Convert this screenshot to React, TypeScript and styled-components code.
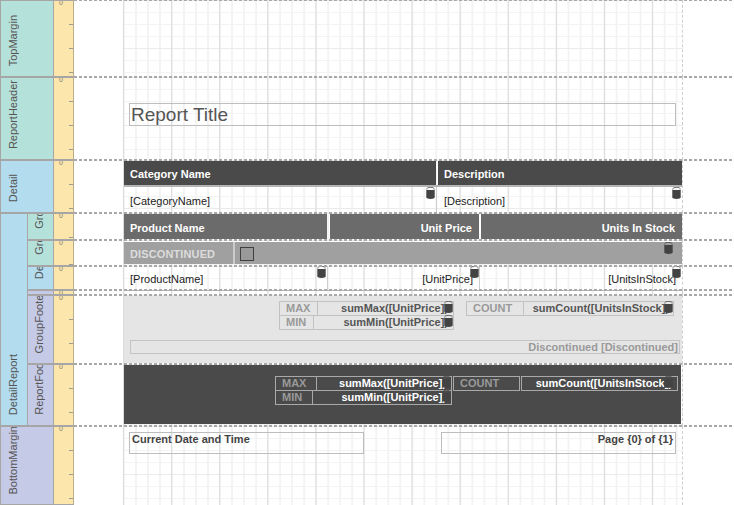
import React from "react"
import styled, { createGlobalStyle } from "styled-components"

const GlobalStyle = createGlobalStyle`
  html, body {
    margin: 0;
    background: #fff;
    overflow: hidden;
  }
  body {
    font-family: "Liberation Sans", Arial, sans-serif;
    font-size: 11px;
    color: #222;
  }
`

const tones = {
  teal: "#b5e1db",
  blue: "#b3dcef",
  lavender: "#c5cae7",
}
type Tone = keyof typeof tones

const Designer = styled.div`
  display: flex;
  flex-direction: column;
  width: 734px;
  height: 505px;
  overflow: hidden;
`

const BandRow = styled.div<{ $height: number }>`
  display: flex;
  height: ${(p) => p.$height}px;
  flex: none;
`

const BandLabel = styled.div<{ $tone: Tone; $width: number; $nested?: boolean }>`
  display: flex;
  flex-direction: column;
  justify-content: flex-end;
  align-items: flex-start;
  box-sizing: border-box;
  flex: none;
  width: ${(p) => p.$width}px;
  padding-left: ${(p) => (p.$nested ? 5 : 6)}px;
  background: ${(p) => tones[p.$tone]};
  border: 1px solid #a6a6a6;
  border-left-width: ${(p) => (p.$nested ? 0 : 1)}px;
  overflow: hidden;
`

const LabelText = styled.span`
  flex: none;
  writing-mode: vertical-rl;
  transform: rotate(180deg);
  margin-bottom: 10px;
  color: #555;
  white-space: nowrap;
  line-height: 13px;
`

const Surface = styled.div`
  position: relative;
  display: flex;
  flex: 1;

  /* band seam, sits across the ruler edge and the page */
  &::after {
    content: "";
    position: absolute;
    left: 20px;
    right: 0;
    top: -1px;
    height: 2px;
    background: repeating-linear-gradient(to right, #a8a8a8 0 3px, transparent 3px 5px);
  }
`

const Ruler = styled.div`
  box-sizing: border-box;
  flex: none;
  width: 20px;
  padding-left: 5px;
  background-color: #fde6ab;
  background-image: linear-gradient(#9c9c90 1px, transparent 1px);
  background-size: 4px 24px;
  background-position: right -1px;
  background-repeat: repeat-y;
  border-top: 1px solid #a6a6a6;
  border-bottom: 1px solid #a6a6a6;
  border-right: 1px solid #b9ae88;
  color: #777;
  font-size: 7px;
  line-height: 3px;
  overflow: hidden;
`

const Gutter = styled.div`
  flex: none;
  width: 49px;
  background: #fff;
`

const Canvas = styled.div`
  box-sizing: border-box;
  display: flex;
  flex-direction: column;
  flex: none;
  width: 560px;
  padding-left: 1px;
  border-right: 1px dashed #cfcfcf;
  background-image:
    linear-gradient(to right, #dcdcdc 1px, transparent 1px),
    linear-gradient(to bottom, #ebebeb 1px, transparent 1px),
    linear-gradient(to right, #f3f3f3 1.4px, transparent 1.4px),
    linear-gradient(to bottom, #f3f3f3 1.4px, transparent 1.4px);
  background-size: 48.1px 100%, 100% 48px, 12.03px 100%, 100% 12px;
`

const Row = styled.div<{ $height: number; $top?: number; $rule?: boolean }>`
  position: relative;
  display: flex;
  flex: none;
  box-sizing: border-box;
  height: ${(p) => p.$height}px;
  margin-top: ${(p) => p.$top ?? 0}px;
  border-top: ${(p) => (p.$rule ? "2px solid #b4b4b4" : "0")};
`

const Divider = styled.div`
  flex: none;
  width: 558px;
  height: 1px;
  background: #b4b4b4;
`

const HeadCell = styled.div<{ $width: number; $fill: string; $end?: boolean; $after?: number }>`
  display: flex;
  align-items: center;
  justify-content: ${(p) => (p.$end ? "flex-end" : "flex-start")};
  box-sizing: border-box;
  flex: none;
  width: ${(p) => p.$width}px;
  margin-right: ${(p) => p.$after ?? 0}px;
  padding: 2px 7px 0 6px;
  background: ${(p) => p.$fill};
  color: #fff;
  font-weight: 700;
`

const DataCell = styled.div<{ $width: number; $end?: boolean; $line?: boolean; $start?: number }>`
  display: flex;
  align-items: center;
  justify-content: ${(p) => (p.$end ? "flex-end" : "flex-start")};
  box-sizing: border-box;
  position: relative;
  flex: none;
  width: ${(p) => p.$width}px;
  padding: 2px 6px 0 ${(p) => p.$start ?? 6}px;
  border-right: ${(p) => (p.$line ? "1px solid #cdcdcd" : "0")};
  color: #1c1c1c;
`

const FlagLabel = styled.div`
  display: flex;
  align-items: center;
  box-sizing: border-box;
  flex: none;
  width: 111px;
  padding: 2px 0 0 6px;
  border-right: 2px solid #cbcbcb;
  color: #dcdcdc;
  font-weight: 700;
  letter-spacing: 0.12px;
`

const FlagBar = styled.div`
  position: relative;
  display: flex;
  flex: none;
  width: 558px;
  height: 100%;
  background: #a0a0a0;
`

const CheckBox = styled.div`
  box-sizing: border-box;
  flex: none;
  width: 14px;
  height: 14px;
  margin: 5px 0 0 5px;
  border: 1px solid #3f3f3f;
  background: #999;
`

const TitleField = styled.div`
  box-sizing: border-box;
  flex: none;
  width: 547px;
  height: 23px;
  padding-left: 1px;
  border: 1px solid #bdbdbd;
  color: #555;
  font-size: 19px;
  line-height: 21px;
`

const NoteField = styled.div<{ $end?: boolean }>`
  box-sizing: border-box;
  flex: none;
  width: 235px;
  height: 22px;
  padding: 0 2px;
  border: 1px solid #bdbdbd;
  text-align: ${(p) => (p.$end ? "right" : "left")};
  color: #444;
  font-weight: 700;
  line-height: 12px;
`

const TitleSlot = styled.div`
  display: flex;
  padding: 26px 0 0 5px;
`

const PageFooter = styled.div`
  display: flex;
  gap: 77px;
  padding: 6px 0 0 5px;
`

const SummaryPanel = styled.div<{ $dark?: boolean }>`
  display: flex;
  flex-direction: column;
  flex: none;
  width: ${(p) => (p.$dark ? 557 : 558)}px;
  height: ${(p) => (p.$dark ? 59 : 67)}px;
  margin-top: 1px;
  background: ${(p) => (p.$dark ? "#4a4a4a" : "#e5e5e5")};
`

const SummaryRow = styled.div<{ $inset: number; $top: number }>`
  display: flex;
  align-items: flex-start;
  padding: ${(p) => p.$top}px 0 0 ${(p) => p.$inset}px;
`

const SumTable = styled.div<{ $width: number; $left?: number; $dark?: boolean }>`
  position: relative;
  box-sizing: border-box;
  flex: none;
  width: ${(p) => p.$width}px;
  margin-left: ${(p) => p.$left ?? 0}px;
  border: 1px solid ${(p) => (p.$dark ? "#a9a9a9" : "#c2c2c2")};
`

const SumLine = styled.div<{ $dark?: boolean; $last?: boolean }>`
  display: flex;
  height: 13px;
  border-bottom: ${(p) => (p.$last ? "0" : `1px solid ${p.$dark ? "#a9a9a9" : "#c2c2c2"}`)};
`

const SumName = styled.div<{ $width: number; $dark?: boolean }>`
  box-sizing: border-box;
  flex: none;
  width: ${(p) => p.$width}px;
  padding-left: 6px;
  border-right: 1px solid ${(p) => (p.$dark ? "#a9a9a9" : "#c2c2c2")};
  color: #999;
  font-weight: 700;
  line-height: 13px;
`

const SumValue = styled.div<{ $dark?: boolean; $pad: number }>`
  flex: 1;
  padding-right: ${(p) => p.$pad}px;
  color: ${(p) => (p.$dark ? "#fff" : "#555")};
  font-weight: 700;
  line-height: 13px;
  text-align: right;
  white-space: nowrap;
`

const GroupNote = styled.div`
  box-sizing: border-box;
  flex: none;
  width: 550px;
  height: 14px;
  margin: auto 0 9px 6px;
  padding-right: 1px;
  border: 1px solid #c4c4c4;
  color: #999;
  font-weight: 700;
  line-height: 12px;
  text-align: right;
`

const GripSlot = styled.span<{ $right: number; $top?: number }>`
  position: absolute;
  right: ${(p) => p.$right}px;
  top: ${(p) => p.$top ?? 0}px;
  display: flex;
  line-height: 0;
`

// small database drum shown at the corner of a bound control
const Grip = ({ right, top }: { right: number; top?: number }) => (
  <GripSlot $right={right} $top={top}>
    <svg width="9" height="12" viewBox="0 0 9 12">
      <path d="M0.8 1.6C1.2 0.7 2.8 0.4 4.5 0.4S7.8 0.7 8.2 1.6" fill="none" stroke="#4a4a4a" strokeWidth="0.9" />
      <path d="M0.3 2.5C2 3.2 7 3.2 8.7 2.5V10.6C8.7 11.5 6.8 12 4.5 12S0.3 11.5 0.3 10.6Z" fill="#434343" />
    </svg>
  </GripSlot>
)

const OuterGroup = styled.div`
  display: flex;
  flex: none;
`

const InnerBands = styled.div`
  display: flex;
  flex-direction: column;
  flex: 1;
`

type BandProps = {
  label?: string
  tone: Tone
  height: number
  nested?: boolean
  children?: React.ReactNode
}

const Band = ({ label, tone, height, nested, children }: BandProps) => (
  <BandRow $height={height}>
    <BandLabel $tone={tone} $width={nested ? 26 : 54} $nested={nested}>
      {label && <LabelText>{label}</LabelText>}
    </BandLabel>
    <Surface>
      <Ruler>0</Ruler>
      <Gutter />
      <Canvas>{children}</Canvas>
    </Surface>
  </BandRow>
)

export default function App() {
  return (
    <Designer>
      <GlobalStyle />
      <Band label="TopMargin" tone="teal" height={77} />
      <Band label="ReportHeader" tone="teal" height={83}>
        <TitleSlot>
          <TitleField>Report Title</TitleField>
        </TitleSlot>
      </Band>
      <Band label="Detail" tone="blue" height={53}>
        <Row $height={24} $top={1}>
          <HeadCell $width={312} $fill="#4a4a4a" $after={2}>Category Name</HeadCell>
          <HeadCell $width={244} $fill="#4a4a4a">Description</HeadCell>
        </Row>
        <Row $height={28} $rule>
          <DataCell $width={313} $line>
            [CategoryName]
            <Grip right={1} />
          </DataCell>
          <DataCell $width={245} $start={7}>
            [Description]
            <Grip right={1} />
          </DataCell>
        </Row>
      </Band>
      <OuterGroup>
        <BandLabel $tone="blue" $width={28}>
          <LabelText>DetailReport</LabelText>
        </BandLabel>
        <InnerBands>
          <Band label="GroupHeader1" tone="teal" height={27} nested>
            <Row $height={25} $top={1}>
              <HeadCell $width={203} $fill="#6b6b6b" $after={3}>Product Name</HeadCell>
              <HeadCell $width={149} $fill="#6b6b6b" $after={2} $end>Unit Price</HeadCell>
              <HeadCell $width={201} $fill="#6b6b6b" $end>Units In Stock</HeadCell>
            </Row>
          </Band>
          <Band label="GroupHeader2" tone="teal" height={26} nested>
            <Row $height={22} $top={2}>
              <FlagBar>
                <FlagLabel>DISCONTINUED</FlagLabel>
                <CheckBox />
                <Grip right={9} />
              </FlagBar>
            </Row>
          </Band>
          <Band label="Detail" tone="blue" height={24} nested>
            <Row $height={24}>
              <DataCell $width={204} $line>
                [ProductName]
                <Grip right={1} />
              </DataCell>
              <DataCell $width={152} $end $line>
                [UnitPrice]
                <Grip right={0} />
              </DataCell>
              <DataCell $width={202} $end>
                [UnitsInStock]
                <Grip right={1} />
              </DataCell>
            </Row>
          </Band>
          <Band tone="lavender" height={5} nested>
            <Divider />
          </Band>
          <Band label="GroupFooter" tone="lavender" height={69} nested>
            <SummaryPanel>
              <SummaryRow $inset={155} $top={5}>
                <SumTable $width={175}>
                  <SumLine>
                    <SumName $width={38}>MAX</SumName>
                    <SumValue $pad={5}>sumMax([UnitPrice])</SumValue>
                  </SumLine>
                  <SumLine $last>
                    <SumName $width={34}>MIN</SumName>
                    <SumValue $pad={5}>sumMin([UnitPrice])</SumValue>
                  </SumLine>
                  <Grip right={0} top={-1} />
                  <Grip right={0} top={13} />
                </SumTable>
                <SumTable $width={208} $left={12}>
                  <SumLine $last>
                    <SumName $width={57}>COUNT</SumName>
                    <SumValue $pad={4}>sumCount([UnitsInStock])</SumValue>
                  </SumLine>
                  <Grip right={0} top={-1} />
                </SumTable>
              </SummaryRow>
              <GroupNote>Discontinued [Discontinued]</GroupNote>
            </SummaryPanel>
          </Band>
          <Band label="ReportFooter" tone="lavender" height={62} nested>
            <SummaryPanel $dark>
              <SummaryRow $inset={151} $top={11}>
                <SumTable $width={177} $dark>
                  <SumLine $dark>
                    <SumName $width={41} $dark>MAX</SumName>
                    <SumValue $dark $pad={5}>sumMax([UnitPrice])</SumValue>
                  </SumLine>
                  <SumLine $dark $last>
                    <SumName $width={37} $dark>MIN</SumName>
                    <SumValue $dark $pad={5}>sumMin([UnitPrice])</SumValue>
                  </SumLine>
                  <Grip right={0} top={-1} />
                  <Grip right={0} top={13} />
                </SumTable>
                <SumTable $width={67} $left={1} $dark>
                  <SumLine $dark $last>
                    <SumName $width={66} $dark>COUNT</SumName>
                  </SumLine>
                </SumTable>
                <SumTable $width={157} $left={1} $dark>
                  <SumLine $dark $last>
                    <SumValue $dark $pad={5}>sumCount([UnitsInStock])</SumValue>
                  </SumLine>
                  <Grip right={4} top={-1} />
                </SumTable>
              </SummaryRow>
            </SummaryPanel>
          </Band>
        </InnerBands>
      </OuterGroup>
      <Band label="BottomMargin" tone="lavender" height={79}>
        <PageFooter>
          <NoteField>Current Date and Time</NoteField>
          <NoteField $end>Page {"{0}"} of {"{1}"}</NoteField>
        </PageFooter>
      </Band>
    </Designer>
  )
}
